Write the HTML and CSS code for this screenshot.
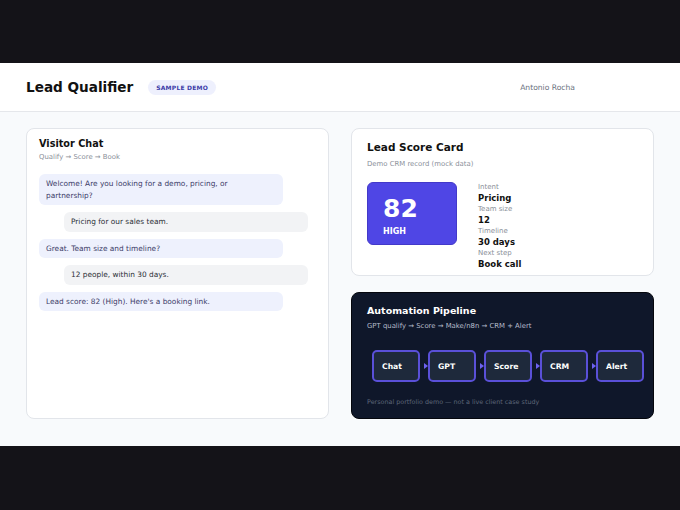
FILE: index.html
```html
<!DOCTYPE html>
<html lang="en">
<head>
  <meta charset="UTF-8" />
  <meta name="viewport" content="width=device-width, initial-scale=1.0" />
  <title>Lead Qualifier</title>
  <link rel="stylesheet" href="styles.css">
</head>
<body>
  <div class="band"></div>

  <header class="topbar">
    <h1>Lead Qualifier</h1>
    <span class="badge">SAMPLE DEMO</span>
    <span class="owner">Antonio Rocha</span>
  </header>

  <main class="content">
    <section class="card chat">
      <h2>Visitor Chat</h2>
      <p class="sub">Qualify → Score → Book</p>
      <div class="messages">
        <div class="msg bot">Welcome! Are you looking for a demo, pricing, or partnership?</div>
        <div class="msg user">Pricing for our sales team.</div>
        <div class="msg bot">Great. Team size and timeline?</div>
        <div class="msg user">12 people, within 30 days.</div>
        <div class="msg bot">Lead score: 82 (High). Here's a booking link.</div>
      </div>
    </section>

    <div class="side">
      <section class="card score">
        <h2>Lead Score Card</h2>
        <p class="sub">Demo CRM record (mock data)</p>
        <div class="score-row">
          <div class="score-box">
            <div class="num">82</div>
            <div class="level">HIGH</div>
          </div>
          <dl class="fields">
            <dt>Intent</dt><dd>Pricing</dd>
            <dt>Team size</dt><dd>12</dd>
            <dt>Timeline</dt><dd>30 days</dd>
            <dt>Next step</dt><dd>Book call</dd>
          </dl>
        </div>
      </section>

      <section class="card pipeline">
        <h2>Automation Pipeline</h2>
        <p class="sub">GPT qualify → Score → Make/n8n → CRM + Alert</p>
        <div class="steps">
          <div class="step">Chat</div>
          <div class="step">GPT</div>
          <div class="step">Score</div>
          <div class="step">CRM</div>
          <div class="step">Alert</div>
        </div>
        <p class="note">Personal portfolio demo — not a live client case study</p>
      </section>
    </div>
  </main>

  <div class="band"></div>
</body>
</html>
```

FILE: styles.css
```css
body {
  margin: 0;
  background: #141318;
  font-family: "DejaVu Sans", sans-serif;
  color: #111827;
}
.band {
  height: 63px;
  background: #141318;
}
.topbar {
  height: 48px;
  background: #ffffff;
  border-bottom: 1px solid #e5e7eb;
  display: flex;
  align-items: center;
  padding: 0 26px;
}
.topbar h1 {
  margin: 0;
  font-size: 13.6px;
  font-weight: bold;
  color: #111111;
}
.badge {
  margin-left: 15px;
  background: #eef0fd;
  color: #3b3ba8;
  font-size: 6px;
  font-weight: bold;
  padding: 4px 8px;
  border-radius: 8px;
  letter-spacing: 0.2px;
}
.owner {
  margin-left: auto;
  margin-right: 79px;
  font-size: 7.6px;
  color: #6b7280;
}
.content {
  height: 334px;
  box-sizing: border-box;
  background: #f8fafc;
  padding: 16px 26px 0;
  display: grid;
  grid-template-columns: 303px 303px;
  column-gap: 22px;
  align-items: start;
}
.card {
  background: #ffffff;
  border: 1px solid #e2e5ea;
  border-radius: 8px;
  box-sizing: border-box;
}
.card h2 {
  margin: 0;
  font-size: 10px;
  font-weight: bold;
  color: #111111;
}
.card .sub {
  margin: 0;
  font-size: 6.9px;
  color: #8a8f99;
}
.chat {
  height: 291px;
  padding: 9px 12px;
}
.chat h2 {
  font-size: 9.7px;
}
.chat .sub {
  margin-top: 4px;
}
.messages {
  margin-top: 13px;
  display: flex;
  flex-direction: column;
  gap: 7px;
}
.msg {
  width: 244px;
  box-sizing: border-box;
  padding: 4px 7px;
  font-size: 7.4px;
  line-height: 11.5px;
  border-radius: 6px;
}
.msg.bot {
  background: #eef1fd;
  color: #3c3c68;
}
.msg.user {
  margin-left: 25px;
  background: #f2f3f5;
  color: #2b2f36;
}
.side {
  display: flex;
  flex-direction: column;
  gap: 16px;
}
.score {
  height: 148px;
  padding: 12px 15px;
}
.score h2 {
  font-size: 10.5px;
}
.score .sub {
  margin-top: 7px;
}
.score-row {
  margin-top: 14px;
  display: flex;
  align-items: flex-start;
}
.score-box {
  width: 90px;
  height: 63px;
  box-sizing: border-box;
  background: #4f46e5;
  border: 1px solid #4339c9;
  border-radius: 6px;
  color: #ffffff;
  padding: 11px 15px;
  font-weight: bold;
}
.score-box .num {
  font-size: 25px;
  line-height: 30px;
}
.score-box .level {
  font-size: 8px;
  margin-top: 3px;
}
.fields {
  margin: 0 0 0 21px;
}
.fields dt {
  font-size: 7px;
  color: #8a8f99;
  line-height: 11px;
}
.fields dd {
  margin: 0;
  font-size: 8.5px;
  font-weight: bold;
  color: #111111;
  line-height: 11px;
}
.pipeline {
  height: 127px;
  background: #0f172a;
  border: 1px solid #05070d;
  padding: 12px 15px;
}
.pipeline h2 {
  font-size: 9.5px;
  color: #ffffff;
}
.pipeline .sub {
  margin-top: 6px;
  color: #b6bccb;
}
.steps {
  margin-top: 20px;
  padding-left: 5px;
  display: flex;
  gap: 8px;
}
.step {
  position: relative;
  flex: 0 0 48px;
  height: 32px;
  box-sizing: border-box;
  background: #1e293b;
  border: 2px solid #5a50d8;
  border-radius: 5px;
  color: #ffffff;
  font-size: 7.7px;
  font-weight: bold;
  padding-left: 8px;
  display: flex;
  align-items: center;
}
.step + .step::before {
  content: "";
  position: absolute;
  left: -6px;
  top: 11px;
  border-left: 4px solid #6d62f0;
  border-top: 3.5px solid transparent;
  border-bottom: 3.5px solid transparent;
}
.note {
  margin: 16px 0 0;
  font-size: 6.4px;
  color: #5d6678;
}
```
